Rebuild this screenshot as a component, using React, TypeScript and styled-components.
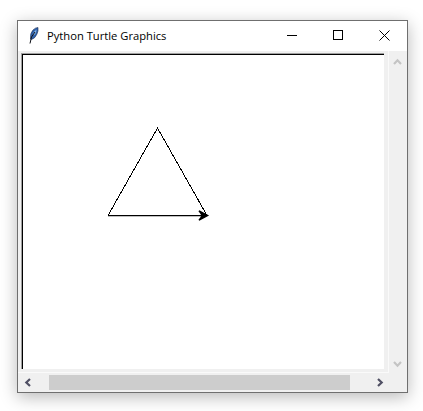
import styled, { createGlobalStyle } from 'styled-components';

const GlobalStyle = createGlobalStyle`
  html, body {
    margin: 0;
    padding: 0;
    background: #ffffff;
    overflow: hidden;
  }
`;

const Page = styled.div`
  width: 423px;
  height: 411px;
  padding: 20px 0 0 17px;
  box-sizing: border-box;
`;

const Window = styled.div`
  width: 391px;
  height: 373px;
  box-sizing: border-box;
  border: 1px solid #6f6f6f;
  background: #f0f0f0;
  box-shadow: 0 4px 16px rgba(0, 0, 0, 0.28);
  display: flex;
  flex-direction: column;
`;

const TitleBar = styled.div`
  height: 30px;
  flex: none;
  box-sizing: border-box;
  padding: 0 0 2px 11px;
  background: #ffffff;
  display: flex;
  align-items: center;
`;

const Title = styled.span`
  margin-left: 8px;
  flex: 1;
  font: 11.2px 'Open Sans', 'Liberation Sans', sans-serif;
  color: #000000;
`;

const WinButton = styled.div`
  width: 46px;
  height: 28px;
  display: flex;
  align-items: center;
  justify-content: center;
`;

const Body = styled.div`
  flex: 1;
  min-height: 0;
  display: grid;
  grid-template-columns: 371px 17px;
  grid-template-rows: 322px 18px;
`;

const CanvasCell = styled.div`
  box-sizing: border-box;
  padding: 2px 0 0 3px;
  border-right: 1px solid #fafafa;
  border-bottom: 1px solid #fafafa;
`;

const CanvasFrame = styled.div`
  width: 363px;
  height: 316px;
  box-sizing: border-box;
  border-top: 1px solid #a0a0a0;
  border-left: 1px solid #a0a0a0;
`;

const Canvas = styled.div`
  width: 362px;
  height: 315px;
  box-sizing: border-box;
  background: #ffffff;
  border-top: 1px solid #000000;
  border-left: 1px solid #000000;
  overflow: hidden;
`;

const VScroll = styled.div`
  grid-row: 1 / 3;
  grid-column: 2;
  height: 322px;
  box-sizing: border-box;
  padding: 6px 0 4px;
  display: flex;
  flex-direction: column;
  justify-content: space-between;
  align-items: center;
`;

const HScroll = styled.div`
  display: flex;
  padding: 2px 0 1px;
`;

const ArrowCell = styled.div`
  width: 18px;
  flex: none;
  display: flex;
  align-items: center;
  justify-content: center;
`;

const Track = styled.div`
  flex: 1;
  padding-left: 13px;
`;

const Thumb = styled.div`
  width: 301px;
  height: 15px;
  background: #cdcdcd;
`;

const ChevronSvg = styled.svg<{ $rot: number }>`
  display: block;
  transform: rotate(${({ $rot }) => $rot}deg);
`;

const Feather = () => (
  <svg width="10" height="17" viewBox="0 0 10 17">
    <path d="M1.5 12 Q1 6 4 3 Q6.5 0.5 9 0.5 Q9.5 4 8 7 Q6 11.5 2.5 12.5 Z" fill="#2f62ad" stroke="#1c2b4d" strokeWidth="0.6" />
    <path d="M4 8 Q5 4 7.5 2.5 Q7.5 5 6 7.5 Z" fill="#8db9e6" />
    <path d="M1 16.5 L2.5 10 L6 5" fill="none" stroke="#0d0f16" strokeWidth="1" />
  </svg>
);

const Chevron = ({ dir, color }: { dir: 'up' | 'down' | 'left' | 'right'; color: string }) => {
  const rot = { up: 0, right: 90, down: 180, left: 270 }[dir];
  return (
    <ChevronSvg $rot={rot} width="9" height="9" viewBox="0 0 9 9">
      <path d="M1 7 L4.5 3.3 L8 7" fill="none" stroke={color} strokeWidth="2.2" />
    </ChevronSvg>
  );
};

export default function App() {
  return (
    <Page>
      <GlobalStyle />
      <Window>
        <TitleBar>
          <Feather />
          <Title>Python Turtle Graphics</Title>
          <WinButton>
            <svg width="10" height="10" viewBox="0 0 10 10">
              <path d="M0 5.5 H10" stroke="#000" strokeWidth="1" />
            </svg>
          </WinButton>
          <WinButton>
            <svg width="10" height="10" viewBox="0 0 10 10">
              <rect x="0.5" y="0.5" width="9" height="9" fill="none" stroke="#000" strokeWidth="1" />
            </svg>
          </WinButton>
          <WinButton>
            <svg width="11" height="11" viewBox="0 0 11 11">
              <path d="M0.5 0.5 L10.5 10.5 M10.5 0.5 L0.5 10.5" stroke="#000" strokeWidth="1" />
            </svg>
          </WinButton>
        </TitleBar>
        <Body>
          <CanvasCell>
            <CanvasFrame>
              <Canvas>
                <svg width="361" height="314" viewBox="0 0 361 314" shapeRendering="crispEdges">
                  <path d="M85 160.5 L134.5 73 L184 160.5" fill="none" stroke="#000" strokeWidth="1" />
                  <path d="M85 160.6 H180" fill="none" stroke="#000" strokeWidth="1.4" shapeRendering="auto" />
                  <path d="M176 155.8 L184.6 160.6 L176 165.2 L178.5 162 L178.5 159.2 Z" fill="#000" stroke="#000" strokeWidth="1.4" shapeRendering="auto" />
                </svg>
              </Canvas>
            </CanvasFrame>
          </CanvasCell>
          <VScroll>
            <Chevron dir="up" color="#c4c4c4" />
            <Chevron dir="down" color="#c4c4c4" />
          </VScroll>
          <HScroll>
            <ArrowCell>
              <Chevron dir="left" color="#505064" />
            </ArrowCell>
            <Track>
              <Thumb />
            </Track>
            <ArrowCell>
              <Chevron dir="right" color="#505064" />
            </ArrowCell>
          </HScroll>
        </Body>
      </Window>
    </Page>
  );
}
